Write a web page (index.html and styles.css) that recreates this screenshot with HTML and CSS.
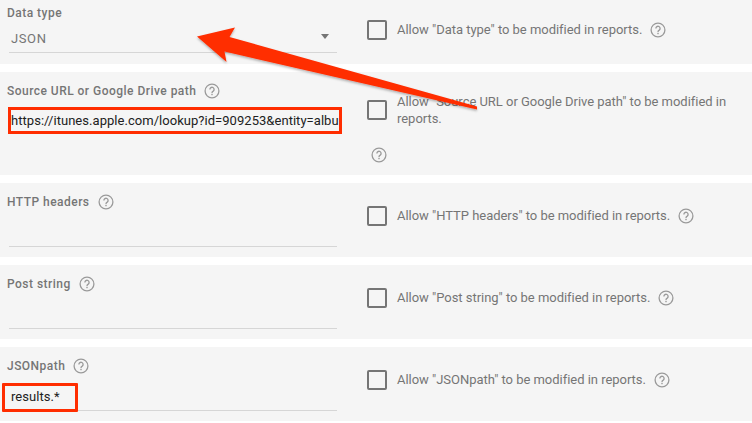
FILE: index.html
```html
<!DOCTYPE html>
<html lang="en">
<head>
<meta charset="utf-8">
<title>Data source settings</title>
<link rel="stylesheet" href="styles.css">
</head>
<body>
<svg width="0" height="0" class="defs" aria-hidden="true">
  <symbol id="help" viewBox="0 0 16 16">
    <circle cx="8" cy="8" r="6.9" fill="none" stroke="#9a9a9a" stroke-width="1.3"/>
    <path d="M5.9 6.4a2.1 2.1 0 1 1 3.3 1.7c-.8.5-1.2.9-1.2 1.8" fill="none" stroke="#9a9a9a" stroke-width="1.3"/>
    <rect x="7.3" y="10.8" width="1.4" height="1.4" fill="#9a9a9a"/>
  </symbol>
</svg>
<main class="form">
  <section class="row row-type">
    <div class="field">
      <div class="label">Data type</div>
      <div class="control select"><span class="value">JSON</span><span class="caret"></span></div>
    </div>
    <div class="allow">
      <span class="box"></span>
      <p class="allow-text">Allow "Data type" to be modified in reports.<svg class="help after"><use href="#help"/></svg></p>
    </div>
  </section>
  <section class="row row-source">
    <div class="field">
      <div class="label">Source URL or Google Drive path<svg class="help"><use href="#help"/></svg></div>
      <div class="control url"><span class="value dark">https://itunes.apple.com/lookup?id=909253&amp;entity=albu</span></div>
    </div>
    <div class="allow wrap">
      <span class="box"></span>
      <div class="allow-col">
        <p class="allow-text">Allow "Source URL or Google Drive path" to be modified in reports.</p>
        <svg class="help below"><use href="#help"/></svg>
      </div>
    </div>
  </section>
  <section class="row">
    <div class="field">
      <div class="label">HTTP headers<svg class="help"><use href="#help"/></svg></div>
      <div class="control"></div>
    </div>
    <div class="allow">
      <span class="box"></span>
      <p class="allow-text">Allow "HTTP headers" to be modified in reports.<svg class="help after"><use href="#help"/></svg></p>
    </div>
  </section>
  <section class="row">
    <div class="field">
      <div class="label">Post string<svg class="help"><use href="#help"/></svg></div>
      <div class="control"></div>
    </div>
    <div class="allow">
      <span class="box"></span>
      <p class="allow-text">Allow "Post string" to be modified in reports.<svg class="help after"><use href="#help"/></svg></p>
    </div>
  </section>
  <section class="row">
    <div class="field">
      <div class="label">JSONpath<svg class="help"><use href="#help"/></svg></div>
      <div class="control"><span class="value dark boxed">results.*</span></div>
    </div>
    <div class="allow">
      <span class="box"></span>
      <p class="allow-text">Allow "JSONpath" to be modified in reports.<svg class="help after"><use href="#help"/></svg></p>
    </div>
  </section>
</main>
<svg class="arrow" width="752" height="423" viewBox="0 0 752 423" aria-hidden="true">
  <defs>
    <filter id="shadow" x="-5%" y="-20%" width="110%" height="150%">
      <feDropShadow dx="0" dy="1.5" stdDeviation="1.2" flood-color="#000" flood-opacity=".3"/>
    </filter>
  </defs>
  <polygon filter="url(#shadow)" fill="#ff2d00" points="197,36.500 235,27.500 229.500,37 477,106.500 477,109.500 224.500,51.500 226.500,62"/>
</svg>
</body>
</html>
```
FILE: styles.css
```css
* { box-sizing: border-box; }
html, body { margin: 0; padding: 0; }
body {
  width: 752px;
  height: 423px;
  overflow: hidden;
  background: #fff;
  font-family: Roboto, "Liberation Sans", sans-serif;
  position: relative;
}
.defs { position: absolute; }
.form { display: flex; flex-direction: column; gap: 8px; }
.row {
  display: grid;
  grid-template-columns: 367px 1fr;
  height: 74px;
  background: #f5f5f5;
}
.row-type { height: 64px; }
.row-source { height: 103px; }
.field { padding: 11px 30px 0 7px; display: flex; flex-direction: column; }
.row-type .field { padding-top: 5px; }
.row-source .field { padding-top: 11px; }
.label {
  display: flex;
  align-items: center;
  height: 16px;
  font-size: 12px;
  font-weight: 500;
  letter-spacing: .47px;
  color: #757575;
}
.label .help { margin-left: 8px; }
.help { width: 16px; height: 16px; flex: none; }
.control {
  position: relative;
  height: 37px;
  margin: 0 0 0 2px;
  border-bottom: 1px solid #d6d6d6;
  display: flex;
  align-items: center;
  justify-content: space-between;
  font-size: 13px;
}
.select { height: 32px; }
.value { padding-left: 2px; color: #757575; letter-spacing: .6px; }
.select .value { position: relative; top: 2px; }
.value.dark { color: #212121; letter-spacing: .04px; white-space: nowrap; }
.url { border-bottom: 0; height: 34px; margin: 4px -5px 0 1px; }
.url .value {
  display: block;
  width: 334px;
  height: 27px;
  padding: 0 0 0 0;
  line-height: 21px;
  border: 3px solid #ff2d00;
  overflow: hidden;
}
.boxed {
  position: relative;
  top: 5px;
  left: -7px;
  display: block;
  width: 76px;
  height: 29px;
  line-height: 21px;
  padding-left: 6px !important;
  border: 3px solid #ff2d00;
  border-radius: 1px;
}
.caret {
  width: 0;
  height: 0;
  margin-right: 8px;
  border-left: 4.500px solid transparent;
  border-right: 4.500px solid transparent;
  border-top: 5px solid #757575;
}
.allow { display: flex; align-items: flex-start; padding-top: 23px; }
.row-type .allow { padding-top: 20px; }
.row-source .allow { padding-top: 28px; }
.box {
  width: 20px;
  height: 20px;
  flex: none;
  border: 2px solid #757575;
  border-radius: 2px;
}
.allow-text {
  display: flex;
  align-items: center;
  margin: -1px 0 0 10px;
  min-height: 20px;
  font-size: 13px;
  line-height: 17px;
  letter-spacing: -.03px;
  color: #757575;
}
.help.after { margin: 2px 0 0 8px; }
.allow-col { width: 342px; margin-top: -6px; }
.allow-col .allow-text { display: block; }
.help.below { display: block; margin: 20px 0 0 -16px; }
.arrow { position: absolute; left: 0; top: 0; pointer-events: none; }
```
